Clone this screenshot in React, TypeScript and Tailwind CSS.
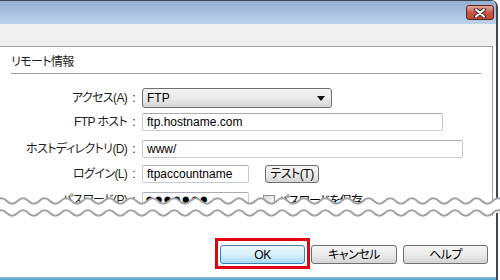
import React from "react";

// wavy "cut" line, computed from wavelength / amplitude
const wavePath = (y: number, amp: number, len: number, width: number) => {
  const h = len / 2;
  let d = `M-4 ${y} q${h / 2} ${-2 * amp} ${h} 0`;
  for (let x = h - 4; x < width + len; x += h) {
    d += ` t${h} 0`;
  }
  return d;
};

const Label: React.FC<{ text: string }> = ({ text }) => (
  <div className="w-[142px] pr-[7px] flex justify-end text-[12px] leading-[16px] text-[#1e1e1e] tracking-[-0.6px] [font-feature-settings:'palt']">
    <span>{text}</span>
    <span className="ml-[5px]">:</span>
  </div>
);

const TextBox: React.FC<{ value: string; w: string }> = ({ value, w }) => (
  <div
    className={`${w} h-[18px] border border-[#c5c9d0] border-t-[#abadb3] rounded-[2px] bg-white pl-[4px] text-[12px] leading-[16px] text-black`}
  >
    {value}
  </div>
);

const Btn: React.FC<{ label: string; w: string; focused?: boolean }> = ({ label, w, focused }) => (
  <div
    className={`${w} h-[19px] rounded-[3px] border flex items-center justify-center text-[12px] text-black tracking-[-0.5px] [font-feature-settings:'palt'] ${
      focused
        ? "border-[#3c7fb1] bg-gradient-to-b from-[#eaf6fd] via-[#d9f0fc] to-[#a7d9f5]"
        : "border-[#707070] bg-gradient-to-b from-[#f4f4f4] via-[#ebebeb] to-[#d4d4d4]"
    }`}
  >
    {label}
  </div>
);

export default function App() {
  return (
    <div className="relative w-[500px] h-[280px] overflow-hidden bg-white font-['Liberation_Sans','Noto_Sans_CJK_JP',sans-serif]">
      <div className="w-[498px] h-full flex flex-col border-r-2 border-[#3a4858] rounded-tr-[7px] overflow-hidden">
        {/* title bar */}
        <div className="h-[24px] shrink-0 border-t border-[#3c4654] bg-gradient-to-b from-[#95afd0] to-[#bcd3ec] flex justify-end items-start pt-[4px] pr-[2px]">
          <div className="w-[28px] h-[15px] rounded-[3px] border border-[#5e231c] bg-gradient-to-b from-[#eaa898] via-[#c9574a] to-[#bf4636] flex items-center justify-center">
            <svg width="14" height="10" viewBox="0 0 14 10">
              <path d="M3 1.5 L11 8.5 M11 1.5 L3 8.5" stroke="#3a2220" strokeWidth="4" strokeLinecap="round" />
              <path d="M3 1.5 L11 8.5 M11 1.5 L3 8.5" stroke="#ffffff" strokeWidth="2.2" strokeLinecap="round" />
            </svg>
          </div>
        </div>
        <div className="h-[22px] shrink-0 bg-[#f0f0f0]" />

        {/* panel */}
        <div className="h-[170px] shrink-0 overflow-hidden border-t border-r border-[#a0a0a0] mr-[3px] bg-white">
          <div className="mx-[11px] mt-[7px] pb-[3px] border-b border-[#a0a0a0] text-[12px] leading-[16px] text-[#1e1e1e] tracking-[-0.6px] [font-feature-settings:'palt']">
            リモート情報
          </div>

          <div className="mt-[14px] flex items-center h-[20px]">
            <Label text="アクセス(A)" />
            <div className="w-[190px] h-[20px] rounded-[3px] border border-[#707070] bg-gradient-to-b from-[#f3f3f3] via-[#eaeaea] to-[#d6d6d6] flex items-center justify-between pl-[4px] pr-[6px] text-[12px] text-black">
              <span>FTP</span>
              <svg width="8" height="5" viewBox="0 0 8 5">
                <path d="M0 0 H8 L4 5 Z" fill="#111" />
              </svg>
            </div>
          </div>

          <div className="mt-[5px] flex items-center h-[18px]">
            <Label text="FTP ホスト" />
            <TextBox value="ftp.hostname.com" w="w-[301px]" />
          </div>

          <div className="mt-[9px] flex items-center h-[18px]">
            <Label text="ホストディレクトリ(D)" />
            <TextBox value="www/" w="w-[321px]" />
          </div>

          <div className="mt-[7px] flex items-center h-[18px]">
            <Label text="ログイン(L)" />
            <TextBox value="ftpaccountname" w="w-[107px]" />
            <div className="ml-[16px]">
              <div className="w-[54px] h-[18px] rounded-[3px] border border-[#707070] bg-gradient-to-b from-[#f4f4f4] via-[#ebebeb] to-[#d4d4d4] flex items-center justify-center text-[12px] text-black tracking-[-0.5px] [font-feature-settings:'palt']">
                テスト(T)
              </div>
            </div>
          </div>

          <div className="mt-[9px] flex items-start h-[18px]">
            <Label text="パスワード(P)" />
            <div className="w-[107px] h-[18px] border border-[#c5c9d0] border-t-[#abadb3] rounded-[2px] bg-white pl-[2px] text-[15px] leading-[11px] tracking-[0px] text-black overflow-hidden">
              ●●●●●●●
            </div>
            <div className="ml-[14px] flex items-center gap-[3px] text-[12px] tracking-[-0.6px] [font-feature-settings:'palt']">
              <div className="w-[12px] h-[12px] border border-[#8e8f8f] bg-gradient-to-br from-[#dcdcdc] to-[#fbfbfb]" />
              <span>パスワードを保存</span>
            </div>
          </div>
        </div>

        {/* buttons */}
        <div className="flex-1 flex items-start pt-[22px] pl-[215px]">
          <div className="border-[3px] border-[#e60012] px-[2px] pt-[4px] pb-[2px]">
            <Btn label="OK" w="w-[85px]" focused />
          </div>
          <div className="pt-[7px] ml-[1px] flex gap-[6px]">
            <Btn label="キャンセル" w="w-[86px]" />
            <Btn label="ヘルプ" w="w-[85px]" />
          </div>
        </div>
        <div className="h-[3px] shrink-0 bg-gradient-to-b from-[#8fc4e0] to-[#4a9fcb]" />
      </div>

      {/* torn / cut overlay */}
      <svg className="absolute left-0 top-[190px]" width="500" height="32" viewBox="0 190 500 32">
        <path d={`${wavePath(201, 2.8, 21.6, 500)} L504 213 L-4 213 Z`} fill="#ffffff" />
        <path d={wavePath(201, 2.8, 21.6, 500)} fill="none" stroke="#a3a3a3" strokeWidth="2" />
        <path d={wavePath(213, 2.8, 21.6, 500)} fill="none" stroke="#a3a3a3" strokeWidth="2" />
      </svg>
    </div>
  );
}
